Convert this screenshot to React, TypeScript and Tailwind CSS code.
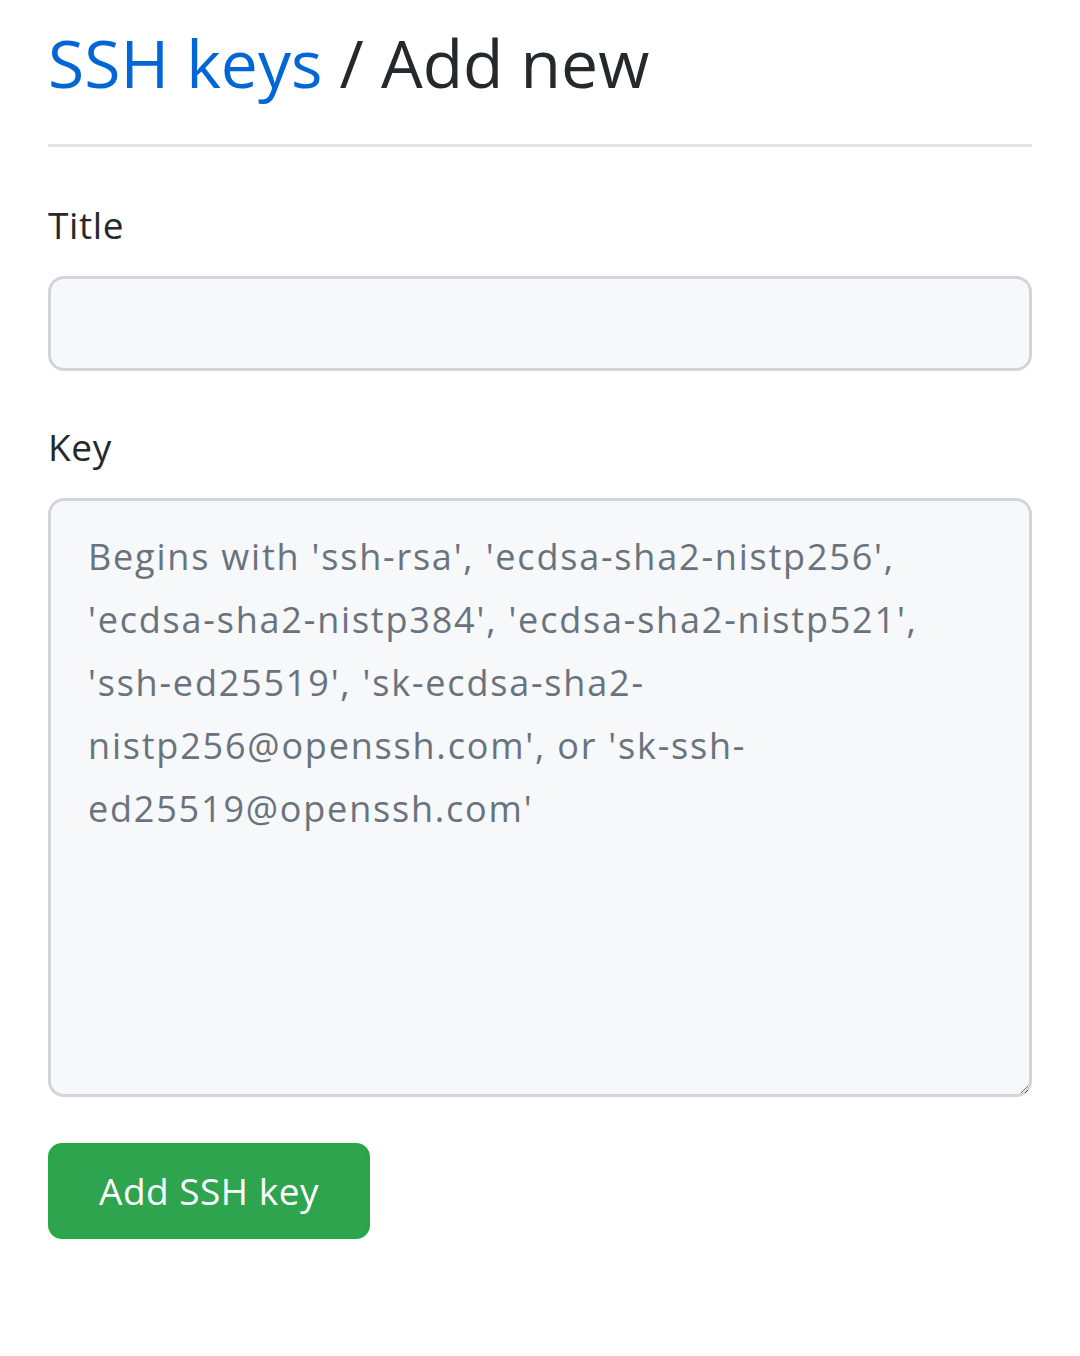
const keyHint =
  "Begins with 'ssh-rsa', 'ecdsa-sha2-nistp256',\n'ecdsa-sha2-nistp384', 'ecdsa-sha2-nistp521',\n'ssh-ed25519', 'sk-ecdsa-sha2-\nnistp256@openssh.com', or 'sk-ssh-\ned25519@openssh.com'";

const App = () => {
  return (
    <div
      className="min-h-[1356px] bg-white px-12 pt-[18px] text-[#24292e]"
      style={{ fontFamily: '"Open Sans", "Noto Sans", sans-serif' }}
    >
      <h1 className="border-b-[3px] border-[#e1e4e8] pb-[38px] text-[66px] font-normal leading-[88px]">
        <a href="#" className="text-[#0366d6]">
          SSH keys
        </a>{' '}
        / Add new
      </h1>

      <form className="pt-[54px]">
        <label className="block text-[37px] leading-[48px] tracking-[0.6px]">Title</label>
        <input
          type="text"
          className="mt-[27px] block h-[95px] w-full rounded-[16px] border-[3px] border-[#d1d5da] bg-[#f6f8fa] px-9 text-[36px] outline-none"
        />

        <label className="mt-[52px] block text-[37px] leading-[48px] tracking-[0.6px]">Key</label>
        <textarea
          placeholder={keyHint}
          className="mt-[27px] block h-[599px] w-full resize-y rounded-[16px] border-[3px] border-[#d1d5da] bg-[#f6f8fa] px-[37px] py-[24px] text-[36px] leading-[63px] tracking-[1.8px] outline-none placeholder:text-[#6a737d]"
        />

        <button
          type="submit"
          className="mt-[46px] h-[96px] w-[322px] rounded-[14px] border-[3px] border-[#28a745] bg-[#2ea44f] text-[37px] tracking-[0.5px] text-white"
        >
          Add SSH key
        </button>
      </form>
    </div>
  );
};

export default App;
